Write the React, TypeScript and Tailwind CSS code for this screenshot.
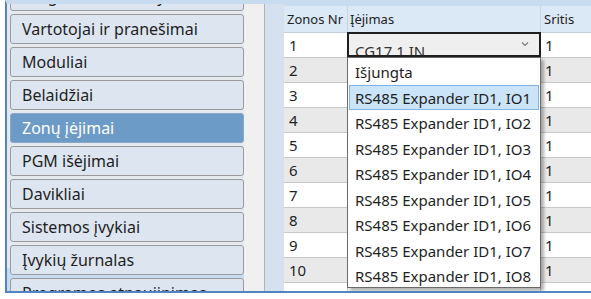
import React from 'react';

const MENU = [
  'Programos nustatymai',
  'Vartotojai ir pranešimai',
  'Moduliai',
  'Belaidžiai',
  'Zonų įėjimai',
  'PGM išėjimai',
  'Davikliai',
  'Sistemos įvykiai',
  'Įvykių žurnalas',
  'Programos atnaujinimas',
];

const OPTIONS = [
  'Išjungta',
  'RS485 Expander ID1, IO1',
  'RS485 Expander ID1, IO2',
  'RS485 Expander ID1, IO3',
  'RS485 Expander ID1, IO4',
  'RS485 Expander ID1, IO5',
  'RS485 Expander ID1, IO6',
  'RS485 Expander ID1, IO7',
  'RS485 Expander ID1, IO8',
];

const ROWS = [1, 2, 3, 4, 5, 6, 7, 8, 9, 10, 11];

const font = { fontFamily: '"Noto Sans", "Open Sans", sans-serif' };

const App = () => {
  return (
    <div className="w-[591px] h-[299px] bg-white overflow-hidden relative text-[#1f1f1f]" style={font}>
      <div className="ml-[5px] w-[586px] h-[293px] border-t-4 border-t-[#c9dcef] border-l-2 border-b-2 border-l-[#4f86c2] border-b-[#4f86c2] flex overflow-hidden bg-[#c9dcef]">
        {/* Left menu */}
        <div className="w-[237px] h-full bg-[#e6e9ee] pl-[3px] flex flex-col gap-[3px] mt-[-23px]">
          {MENU.map((item, i) => (
            <div
              key={item}
              className={
                i === 4
                  ? 'h-[30px] shrink-0 rounded-[3px] border border-[#8aa7c4] bg-[#6d9bc7] text-white text-[16px] leading-[28px] pl-[11px]'
                  : 'h-[30px] shrink-0 rounded-[3px] border border-[#9a9a9a] bg-[#dde6f0] text-[16px] leading-[28px] pl-[11px]'
              }
            >
              {item}
            </div>
          ))}
        </div>
        <div className="w-[21px] h-full bg-[#f0f0f0] border-r border-[#b4b4b4]" />
        <div className="w-[19px] h-full bg-[#d5e1ee]" />

        {/* Table */}
        <div className="flex-1 h-full pt-[2px] relative">
          <div className="h-[27px] bg-[#dbe9f6] flex text-[13px] leading-[27px] text-[#222] border-b border-[#c4cfdb]">
            <div className="w-[64px] pl-[3px] border-r border-[#c6d3e0]">Zonos Nr</div>
            <div className="w-[193px] pl-[2px] border-r border-[#c6d3e0]">Įėjimas</div>
            <div className="flex-1 pl-[3px]">Sritis</div>
          </div>
          {ROWS.map((n) => (
            <div
              key={n}
              className={
                'h-[25px] flex text-[15px] leading-[24px] border-b border-[#c8c8c8] ' +
                (n % 2 === 0 ? 'bg-[#e9e9e9]' : 'bg-white')
              }
            >
              <div className="w-[64px] pl-[5px] border-r border-[#c8c8c8]">{n < 11 ? n : ''}</div>
              <div className="w-[193px] border-r border-[#c8c8c8]" />
              <div className="flex-1 pl-[4px]">{n < 11 ? 1 : ''}</div>
            </div>
          ))}

          {/* Open combo box */}
          <div className="absolute left-[63px] top-[28px] w-[194px] h-[25px] border-2 border-[#1e1e1e] bg-[#efefef] overflow-hidden">
            <div className="text-[15px] leading-[34px] pl-[6px] text-[#333]">CG17 1 IN</div>
            <svg className="absolute right-[10px] top-[7px]" width="8" height="6" viewBox="0 0 8 6">
              <path d="M1 1.5 L4 4.5 L7 1.5" fill="none" stroke="#7a7a7a" strokeWidth="1.2" />
            </svg>
          </div>
          <div className="absolute left-[63px] top-[53px] w-[194px] h-[231px] border border-[#6b6b6b] bg-white shadow-[3px_3px_3px_rgba(0,0,0,0.3)] pt-[1px] px-[1px]">
            {OPTIONS.map((o, i) => (
              <div
                key={o}
                className={
                  'h-[25.5px] text-[15px] leading-[24px] pl-[5px] ' +
                  (i === 1 ? 'bg-[#cce4f7] border border-[#7eb4e2]' : 'border border-transparent')
                }
              >
                {o}
              </div>
            ))}
          </div>
        </div>
      </div>
    </div>
  );
};

export default App;
